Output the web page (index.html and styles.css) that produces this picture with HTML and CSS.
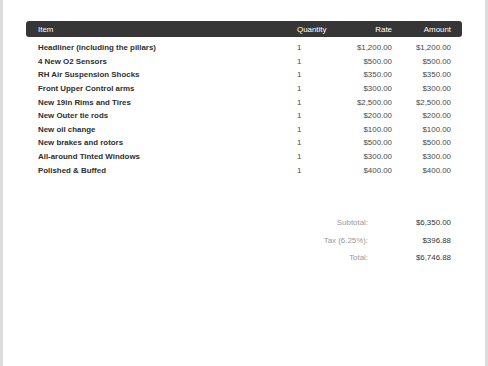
FILE: index.html
```html
<!DOCTYPE html>
<html>
<head>
<meta charset="utf-8">
<link rel="stylesheet" href="styles.css">
</head>
<body>
<div class="page">
  <div class="items">
    <div class="row head">
      <div class="c-item">Item</div>
      <div class="c-qty">Quantity</div>
      <div class="c-rate">Rate</div>
      <div class="c-amt">Amount</div>
    </div>
    <div class="body">
      <div class="row"><div class="c-item">Headliner (including the pillars)</div><div class="c-qty">1</div><div class="c-rate">$1,200.00</div><div class="c-amt">$1,200.00</div></div>
      <div class="row"><div class="c-item">4 New O2 Sensors</div><div class="c-qty">1</div><div class="c-rate">$500.00</div><div class="c-amt">$500.00</div></div>
      <div class="row"><div class="c-item">RH Air Suspension Shocks</div><div class="c-qty">1</div><div class="c-rate">$350.00</div><div class="c-amt">$350.00</div></div>
      <div class="row"><div class="c-item">Front Upper Control arms</div><div class="c-qty">1</div><div class="c-rate">$300.00</div><div class="c-amt">$300.00</div></div>
      <div class="row"><div class="c-item">New 19in Rims and Tires</div><div class="c-qty">1</div><div class="c-rate">$2,500.00</div><div class="c-amt">$2,500.00</div></div>
      <div class="row"><div class="c-item">New Outer tie rods</div><div class="c-qty">1</div><div class="c-rate">$200.00</div><div class="c-amt">$200.00</div></div>
      <div class="row"><div class="c-item">New oil change</div><div class="c-qty">1</div><div class="c-rate">$100.00</div><div class="c-amt">$100.00</div></div>
      <div class="row"><div class="c-item">New brakes and rotors</div><div class="c-qty">1</div><div class="c-rate">$500.00</div><div class="c-amt">$500.00</div></div>
      <div class="row"><div class="c-item">All-around Tinted Windows</div><div class="c-qty">1</div><div class="c-rate">$300.00</div><div class="c-amt">$300.00</div></div>
      <div class="row"><div class="c-item">Polished &amp; Buffed</div><div class="c-qty">1</div><div class="c-rate">$400.00</div><div class="c-amt">$400.00</div></div>
    </div>
  </div>
  <div class="totals">
    <div class="t-label">Subtotal:</div><div class="t-val">$6,350.00</div>
    <div class="t-label">Tax (6.25%):</div><div class="t-val">$396.88</div>
    <div class="t-label">Total:</div><div class="t-val">$6,746.88</div>
  </div>
</div>
</body>
</html>
```
FILE: styles.css
```css
html, body {
  margin: 0;
  padding: 0;
}
body {
  background: #dcdcdc;
  font-family: "Liberation Sans", Arial, Helvetica, sans-serif;
  font-size: 7.9px;
  color: #333;
}
.page {
  background: #fff;
  margin: 0 3px;
  height: 366px;
  box-sizing: border-box;
  padding: 21px 23px 0 23px;
}
.row {
  display: grid;
  grid-template-columns: 259px 60px 60px 57px;
  align-items: center;
  height: 13.6px;
}
.row.head {
  height: 16px;
  background: #363636;
  color: #fff;
  border-radius: 3px;
}
.body {
  padding-top: 4px;
}
.c-item {
  padding-left: 12px;
}
.body .c-item {
  font-weight: bold;
  color: #2e2e2e;
}
.c-qty {
  padding-left: 12px;
}
.c-rate {
  text-align: right;
  padding-right: 13px;
}
.c-amt {
  text-align: right;
  padding-right: 11px;
}
.body .c-qty, .body .c-rate, .body .c-amt {
  color: #4a4a4a;
}
.totals {
  display: grid;
  grid-template-columns: 342px 83px;
  grid-auto-rows: 17.4px;
  align-items: center;
  margin-top: 37px;
}
.t-label {
  text-align: right;
  color: #999;
}
.t-val {
  text-align: right;
  color: #333;
}
```
